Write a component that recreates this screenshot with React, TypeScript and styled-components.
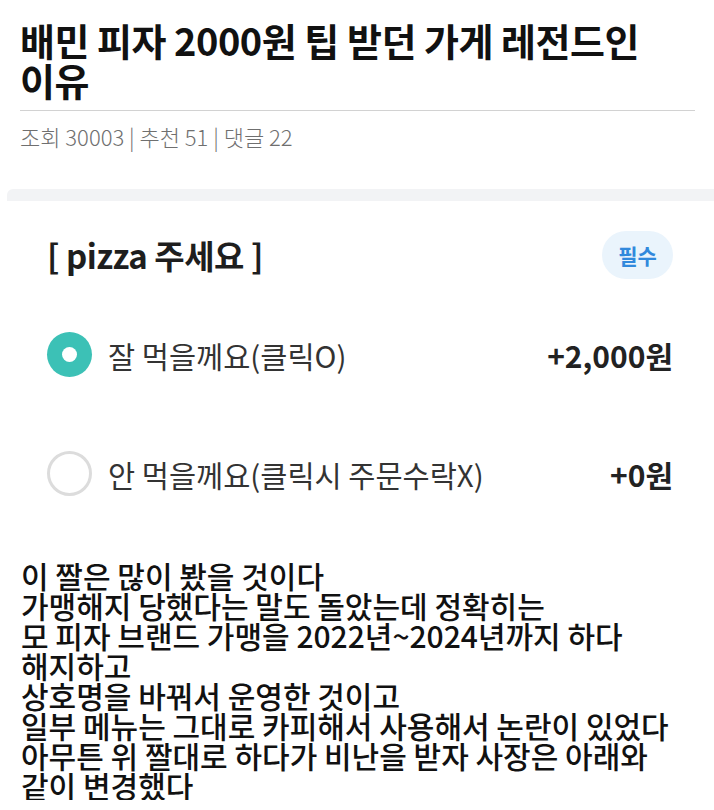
import React from 'react';
import styled, { createGlobalStyle } from 'styled-components';

const GlobalStyle = createGlobalStyle`
  body {
    margin: 0;
    background: #ffffff;
    font-family: 'Noto Sans CJK KR', 'Noto Sans', sans-serif;
    color: #111111;
  }
`;

const Page = styled.div`
  width: 714px;
  overflow: hidden;
`;

const Header = styled.header`
  padding: 20px 19px 0 20px;
`;

const Title = styled.h1`
  margin: 0;
  font-size: 38px;
  line-height: 40px;
  font-weight: 700;
  letter-spacing: -0.5px;
  color: #111111;
`;

const Divider = styled.hr`
  margin: 10px 0 0;
  border: 0;
  height: 1px;
  background: #d2d2d2;
`;

const Meta = styled.div`
  margin-top: 11px;
  font-size: 22px;
  line-height: 28px;
  font-weight: 300;
  color: #6f6f6f;
`;

const Capture = styled.section`
  margin: 39px 0 0 7px;
  background: #ffffff;
`;

const Band = styled.div`
  height: 12px;
  background: #f2f3f5;
  border-radius: 6px 0 0 0;
`;

const Options = styled.div`
  padding: 30px 41px 0 40px;
`;

const GroupHead = styled.div`
  display: flex;
  align-items: center;
  justify-content: space-between;
  height: 48px;
  margin-bottom: 16px;
`;

const GroupTitle = styled.div`
  font-size: 33px;
  font-weight: 700;
  color: #1e1e1e;
  letter-spacing: -0.5px;
`;

const Badge = styled.span`
  display: flex;
  align-items: center;
  justify-content: center;
  width: 71px;
  height: 48px;
  border-radius: 24px;
  background: #eaf4fc;
  color: #3189dc;
  font-size: 21px;
  font-weight: 700;
`;

const OptionRow = styled.div`
  display: flex;
  align-items: center;
  height: 119px;
`;

const Radio = styled.span<{ $checked?: boolean }>`
  box-sizing: border-box;
  flex: none;
  width: 45px;
  height: 45px;
  border-radius: 50%;
  display: flex;
  align-items: center;
  justify-content: center;
  background: ${(p) => (p.$checked ? '#3cc1b6' : '#ffffff')};
  border: ${(p) => (p.$checked ? 'none' : '3px solid #dcdcdc')};
  &::after {
    content: '';
    display: ${(p) => (p.$checked ? 'block' : 'none')};
    width: 15px;
    height: 15px;
    border-radius: 50%;
    background: #ffffff;
  }
`;

const OptionLabel = styled.span`
  flex: 1;
  margin-left: 16px;
  font-size: 29.5px;
  color: #333333;
  white-space: nowrap;
`;

const Price = styled.span`
  font-size: 30px;
  font-weight: 700;
  color: #222222;
  white-space: nowrap;
`;

const Body = styled.div`
  padding: 27px 20px 0 21px;
  font-size: 30px;
  line-height: 30px;
  font-weight: 500;
  color: #111111;
`;

const Line = styled.div`
  white-space: nowrap;
`;

const options = [
  { label: '잘 먹을께요(클릭O)', price: '+2,000원', checked: true },
  { label: '안 먹을께요(클릭시 주문수락X)', price: '+0원', checked: false },
];

const lines = [
  '이 짤은 많이 봤을 것이다',
  '가맹해지 당했다는 말도 돌았는데 정확히는',
  '모 피자 브랜드 가맹을 2022년~2024년까지 하다',
  '해지하고',
  '상호명을 바꿔서 운영한 것이고',
  '일부 메뉴는 그대로 카피해서 사용해서 논란이 있었다',
  '아무튼 위 짤대로 하다가 비난을 받자 사장은 아래와',
  '같이 변경했다',
];

const App = () => (
  <Page>
    <GlobalStyle />
    <Header>
      <Title>
        배민 피자 2000원 팁 받던 가게 레전드인
        <br />
        이유
      </Title>
      <Divider />
      <Meta>조회 30003 | 추천 51 | 댓글 22</Meta>
    </Header>
    <Capture>
      <Band />
      <Options>
        <GroupHead>
          <GroupTitle>[ pizza 주세요 ]</GroupTitle>
          <Badge>필수</Badge>
        </GroupHead>
        {options.map((o) => (
          <OptionRow key={o.label}>
            <Radio $checked={o.checked} />
            <OptionLabel>{o.label}</OptionLabel>
            <Price>{o.price}</Price>
          </OptionRow>
        ))}
      </Options>
    </Capture>
    <Body>
      {lines.map((l) => (
        <Line key={l}>{l}</Line>
      ))}
    </Body>
  </Page>
);

export default App;
